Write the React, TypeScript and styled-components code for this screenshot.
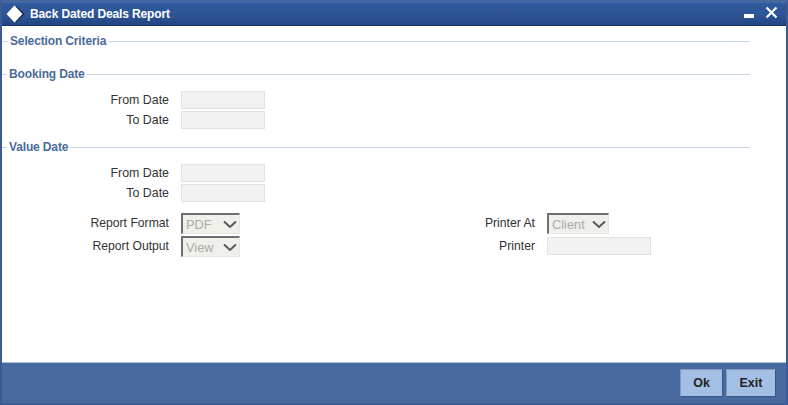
import React from "react";
import styled, { createGlobalStyle } from "styled-components";

const Global = createGlobalStyle`
  html, body { margin: 0; padding: 0; background: #fff; }
  * { box-sizing: border-box; }
`;

const Win = styled.div`
  width: 788px;
  height: 405px;
  display: flex;
  flex-direction: column;
  overflow: hidden;
  background: #38598f;
  border-top: 3px solid #46679f;
  border-left: 2px solid #3a5b96;
  border-right: 2px solid #3a5b96;
  border-bottom: 2px solid #3a5b96;
  font-family: "Liberation Sans", Arial, sans-serif;
`;

const TitleBar = styled.div`
  height: 23px;
  flex: none;
  display: flex;
  align-items: center;
  padding: 0 1px 0 4px;
  background: linear-gradient(#2f5a9f, #2e5596 55%, #234582);
  border-bottom: 1px solid #1c3566;
  color: #fff;
`;

const Title = styled.div`
  margin-left: 5px;
  font-size: 12px;
  font-weight: bold;
  letter-spacing: -0.12px;
  flex: 1;
`;

const Body = styled.div`
  flex: 1;
  background: #fff;
  padding: 0 36px 0 0;
`;

const Section = styled.div<{ $top: number; $lead: number }>`
  display: flex;
  align-items: center;
  height: 14px;
  margin-top: ${(p) => p.$top}px;
  &::before {
    content: "";
    width: ${(p) => p.$lead}px;
    flex: none;
    height: 1px;
    background: #c9d6e4;
  }
  &::after {
    content: "";
    flex: 1;
    height: 1px;
    background: #c9d6e4;
  }
`;

const SectionLabel = styled.span`
  color: #4a6a9c;
  font-size: 12px;
  font-weight: bold;
  letter-spacing: -0.14px;
  padding: 0 2px;
`;

const Rows = styled.div<{ $top: number }>`
  display: flex;
  flex-direction: column;
  gap: 3px;
  margin-top: ${(p) => p.$top}px;
`;

const Row = styled.div`
  display: flex;
  align-items: center;
  height: 17px;
`;

const Label = styled.span`
  width: 167px;
  text-align: right;
  font-size: 12.4px;
  color: #333;
  flex: none;
`;

const TextBox = styled.div<{ $w: number }>`
  width: ${(p) => p.$w}px;
  height: 18px;
  margin-left: 12px;
  background: #f1f1f1;
  border: 1px solid #e2e2dc;
  flex: none;
`;

const TwoCols = styled.div`
  display: flex;
  margin-top: 12px;
`;

const Col = styled.div<{ $w: number }>`
  width: ${(p) => p.$w}px;
  flex: none;
  display: flex;
  flex-direction: column;
  gap: 2px;
`;

const SelRow = styled.div`
  display: flex;
  align-items: flex-start;
  height: 21px;
`;

const SelLabel = styled.span<{ $w: number }>`
  width: ${(p) => p.$w}px;
  text-align: right;
  font-size: 12.2px;
  line-height: 20px;
  color: #333;
  flex: none;
`;

const Select = styled.div<{ $w: number }>`
  width: ${(p) => p.$w}px;
  height: 21px;
  margin-left: 12px;
  flex: none;
  display: flex;
  align-items: center;
  justify-content: space-between;
  padding: 0 2px 0 3px;
  background: #f0efea;
  border-top: 2px solid #6f6f6f;
  border-left: 2px solid #6f6f6f;
  border-right: 1px solid #e6e5df;
  border-bottom: 1px solid #e6e5df;
  font-size: 12.8px;
  color: #aaa;
`;

const PrinterBox = styled(TextBox)`
  margin-top: 1px;
`;

const Footer = styled.div`
  height: 41px;
  flex: none;
  display: flex;
  justify-content: flex-end;
  align-items: center;
  gap: 3px;
  padding: 0 10px 0 0;
  background: #4a6a9f;
  border-top: 1px solid #a9c0e0;
`;

const Button = styled.button`
  width: 43px;
  height: 28px;
  padding: 0;
  background: #a3c0e4;
  border: 1px solid #34568f;
  border-top-color: #7d9ac3;
  border-left-color: #7d9ac3;
  color: #222;
  font-family: inherit;
  font-size: 12.5px;
  font-weight: bold;
`;

const ExitButton = styled(Button)`
  width: 50px;
`;

const Chevron = () => (
  <svg width="14" height="9" viewBox="0 0 14 9" fill="none">
    <path d="M1 1.5 L7 7 L13 1.5" stroke="#555" strokeWidth="1.9" />
  </svg>
);

const Diamond = () => (
  <svg width="19" height="18" viewBox="0 0 19 18">
    <path d="M10 0.5 L18.5 9 L10 17.5 Z" fill="#12284f" />
    <path d="M8.5 0.5 L16.5 9 L8.5 17.5 L0.5 9 Z" fill="#fff" />
  </svg>
);

const Minimize = () => (
  <svg width="10" height="4" viewBox="0 0 10 4">
    <rect width="10" height="4" fill="#fff" />
  </svg>
);

const Close = () => (
  <svg width="13" height="13" viewBox="0 0 13 13">
    <path d="M1.5 1.5 L11.5 11.5 M11.5 1.5 L1.5 11.5" stroke="#fff" strokeWidth="2.2" />
  </svg>
);

const WinButtons = styled.div`
  display: flex;
  align-items: center;
  gap: 11px;
  margin-right: 7px;
  margin-top: -3px;
`;

const MinWrap = styled.span`
  display: flex;
  margin-top: 7px;
`;

const DateRows = ({ top }: { top: number }) => (
  <Rows $top={top}>
    <Row>
      <Label>From Date</Label>
      <TextBox $w={84} />
    </Row>
    <Row>
      <Label>To Date</Label>
      <TextBox $w={84} />
    </Row>
  </Rows>
);

export default function App() {
  return (
    <Win>
      <Global />
      <TitleBar>
        <Diamond />
        <Title>Back Dated Deals Report</Title>
        <WinButtons>
          <MinWrap>
            <Minimize />
          </MinWrap>
          <Close />
        </WinButtons>
      </TitleBar>
      <Body>
        <Section $top={8} $lead={6}>
          <SectionLabel>Selection Criteria</SectionLabel>
        </Section>
        <Section $top={19} $lead={5}>
          <SectionLabel>Booking Date</SectionLabel>
        </Section>
        <DateRows top={10} />
        <Section $top={12} $lead={5}>
          <SectionLabel>Value Date</SectionLabel>
        </Section>
        <DateRows top={10} />
        <TwoCols>
          <Col $w={366}>
            <SelRow>
              <SelLabel $w={167}>Report Format</SelLabel>
              <Select $w={59}>
                PDF
                <Chevron />
              </Select>
            </SelRow>
            <SelRow>
              <SelLabel $w={167}>Report Output</SelLabel>
              <Select $w={59}>
                View
                <Chevron />
              </Select>
            </SelRow>
          </Col>
          <Col $w={300}>
            <SelRow>
              <SelLabel $w={167}>Printer At</SelLabel>
              <Select $w={62}>
                Client
                <Chevron />
              </Select>
            </SelRow>
            <SelRow>
              <SelLabel $w={167}>Printer</SelLabel>
              <PrinterBox $w={104} />
            </SelRow>
          </Col>
        </TwoCols>
      </Body>
      <Footer>
        <Button>Ok</Button>
        <ExitButton>Exit</ExitButton>
      </Footer>
    </Win>
  );
}
